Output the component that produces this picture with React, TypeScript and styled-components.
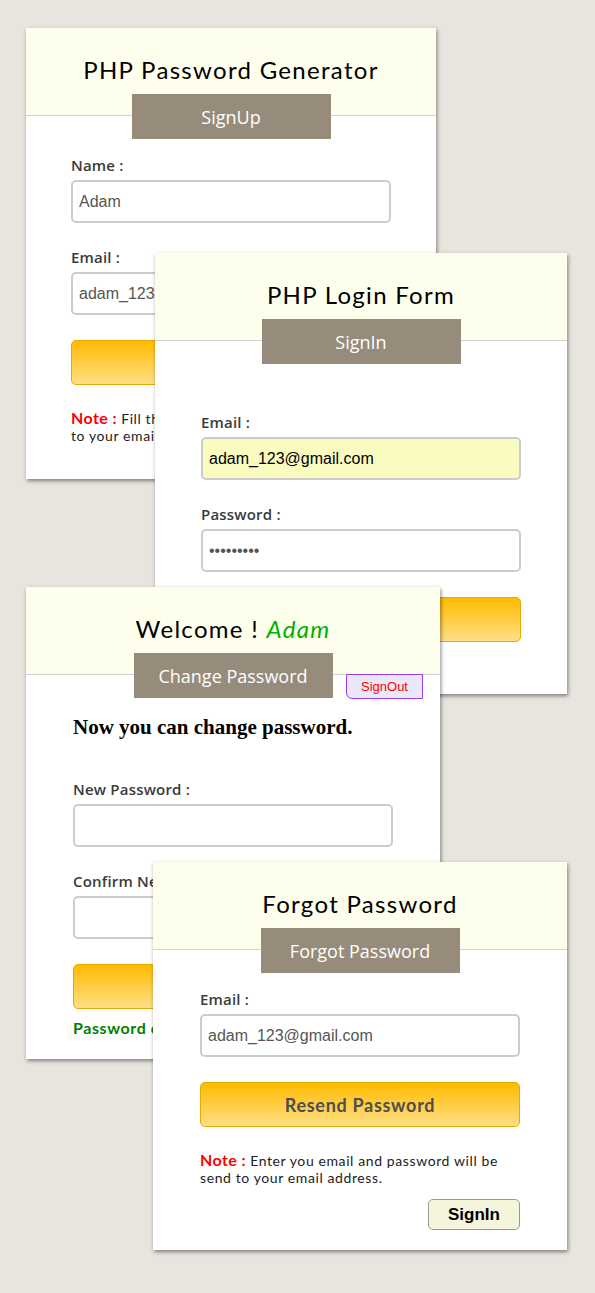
import styled, { createGlobalStyle } from "styled-components";

const GlobalStyle = createGlobalStyle`
	html, body {
		margin: 0;
		padding: 0;
	}
	body {
		background: #e8e5df;
	}
`;

const Desk = styled.div`
	position: relative;
	width: 595px;
	height: 1293px;
	overflow: hidden;
	background: #e8e5df;
`;

const Card = styled.div<{ $left: number; $top: number; $width: number }>`
	position: absolute;
	left: ${({ $left }) => $left}px;
	top: ${({ $top }) => $top}px;
	width: ${({ $width }) => $width}px;
	background: #fff;
	box-shadow: 1px 2px 4px rgba(0, 0, 0, 0.45);
`;

const Head = styled.div`
	display: flex;
	flex-direction: column;
	align-items: center;
	padding-top: 27px;
	background: #fefeec;
	border-bottom: 1px solid #d2d2d2;
`;

const Title = styled.h2`
	margin: 0 0 9px;
	font: 400 24px/30px Lato, "Open Sans", sans-serif;
	color: #000;
	letter-spacing: 1.3px;
`;

const Name = styled.em`
	color: #00b000;
`;

const Tab = styled.div`
	width: 199px;
	height: 45px;
	margin-bottom: -24px;
	background: #978c7c;
	color: #fff;
	font: 400 18px/46px "Open Sans", sans-serif;
	text-align: center;
`;

const Body = styled.div<{ $top: number; $bottom: number }>`
	width: 320px;
	margin: 0 auto;
	padding: ${({ $top }) => $top}px 0 ${({ $bottom }) => $bottom}px;
`;

const Label = styled.label`
	display: block;
	margin-bottom: 6px;
	font: 600 15px/18px "Open Sans", Lato, sans-serif;
	color: #3a3a3a;
	letter-spacing: 0.2px;
`;

const Input = styled.input<{ $autofill?: boolean }>`
	display: block;
	box-sizing: border-box;
	width: 100%;
	height: 43px;
	margin: 0 0 25px;
	padding: 0 6px;
	border: 2px solid #cccccc;
	border-radius: 5px;
	outline: none;
	background: ${({ $autofill }) => ($autofill ? "#fafcbf" : "#fff")};
	color: ${({ $autofill }) => ($autofill ? "#000" : "#555")};
	font: 400 16px "Liberation Sans", Arial, sans-serif;
`;

const Submit = styled.button`
	display: block;
	width: 100%;
	height: 45px;
	margin-top: 4px;
	border: 1px solid #e5a900;
	border-radius: 5px;
	background: linear-gradient(#ffbb00, #ffdf86);
	color: #4e4e4e;
	font: 700 18px Lato, "Open Sans", sans-serif;
	letter-spacing: 0.7px;
`;

const Note = styled.p`
	margin: 24px 0 0;
	font: 400 14px/17px Lato, "Open Sans", sans-serif;
	color: #222;
	letter-spacing: 0.6px;
	white-space: nowrap;
`;

const NoteMark = styled.span`
	color: #ff0000;
	font-size: 16px;
	font-weight: 700;
	letter-spacing: 0.4px;
`;

const SmallButton = styled.button`
	display: block;
	width: 92px;
	height: 31px;
	margin: 13px 0 0 auto;
	border: 1px solid #999;
	border-radius: 5px;
	background: #f5f5dc;
	color: #000;
	font: 700 17px "Liberation Sans", Arial, sans-serif;
`;

const Lead = styled.h3`
	margin: 0 0 40px;
	font: 700 21px/26px "Liberation Serif", "Times New Roman", serif;
	color: #000;
`;

const Success = styled.p`
	margin: 9px 0 0;
	font: 700 16px/20px Lato, "Open Sans", sans-serif;
	color: #008000;
	letter-spacing: 0.6px;
`;

const SignOut = styled.button`
	position: absolute;
	top: 87px;
	right: 17px;
	width: 77px;
	height: 25px;
	padding: 0;
	border: 1px solid #9b3cf2;
	border-radius: 0 0 0 6px;
	background: #e8e8fa;
	color: #ff0000;
	font: 400 13px "Liberation Sans", Arial, sans-serif;
`;

const App = () => (
	<>
		<GlobalStyle />
		<Desk>
			<Card $left={26} $top={28} $width={410}>
				<Head>
					<Title>PHP Password Generator</Title>
					<Tab>SignUp</Tab>
				</Head>
				<Body $top={40} $bottom={35}>
					<Label>Name :</Label>
					<Input defaultValue="Adam" />
					<Label>Email :</Label>
					<Input defaultValue="adam_123@gmail.com" />
					<Submit>SignUp</Submit>
					<Note>
						<NoteMark>Note :</NoteMark> Fill the form and password will be
						<br />
						to your email address.
					</Note>
				</Body>
			</Card>

			<Card $left={155} $top={253} $width={412}>
				<Head>
					<Title>PHP Login Form</Title>
					<Tab>SignIn</Tab>
				</Head>
				<Body $top={72} $bottom={52}>
					<Label>Email :</Label>
					<Input $autofill defaultValue="adam_123@gmail.com" />
					<Label>Password :</Label>
					<Input type="password" defaultValue="123456789" />
					<Submit>Login</Submit>
				</Body>
			</Card>

			<Card $left={26} $top={587} $width={414}>
				<Head>
					<Title>
						Welcome ! <Name>Adam</Name>
					</Title>
					<Tab>Change Password</Tab>
				</Head>
				<SignOut>SignOut</SignOut>
				<Body $top={39} $bottom={21}>
					<Lead>Now you can change password.</Lead>
					<Label>New Password :</Label>
					<Input type="password" />
					<Label>Confirm New Password :</Label>
					<Input type="password" />
					<Submit>Change Password</Submit>
					<Success>Password changed successfully.</Success>
				</Body>
			</Card>

			<Card $left={153} $top={862} $width={414}>
				<Head>
					<Title>Forgot Password</Title>
					<Tab>Forgot Password</Tab>
				</Head>
				<Body $top={40} $bottom={20}>
					<Label>Email :</Label>
					<Input defaultValue="adam_123@gmail.com" />
					<Submit>Resend Password</Submit>
					<Note>
						<NoteMark>Note :</NoteMark> Enter you email and password will be
						<br />
						send to your email address.
					</Note>
					<SmallButton>SignIn</SmallButton>
				</Body>
			</Card>
		</Desk>
	</>
);

export default App;
